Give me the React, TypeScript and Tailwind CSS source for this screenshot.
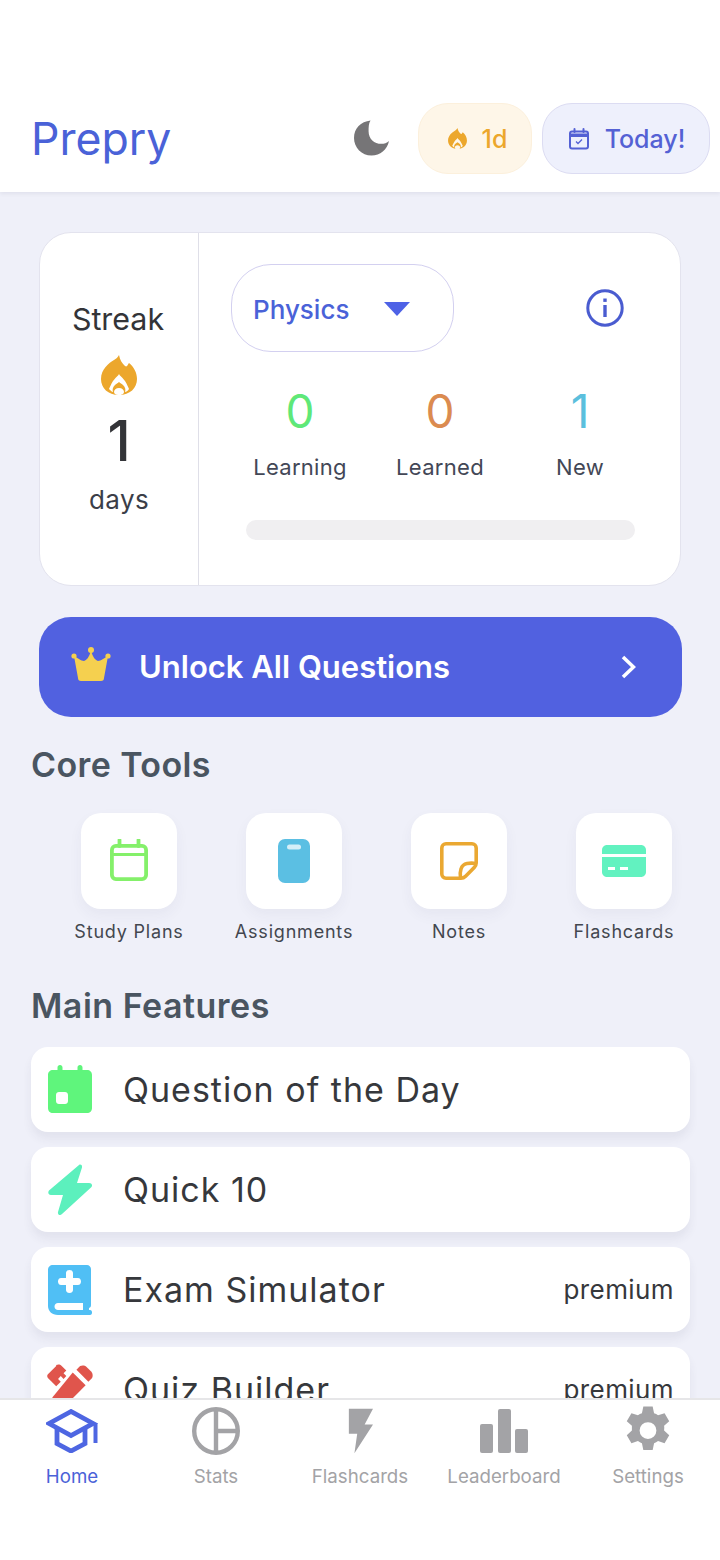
import React from 'react';

function Flame({ className }: { className?: string }) {
  return (
    <svg viewBox="0 0 36 40" className={className} fill="currentColor">
      <path
        fillRule="evenodd"
        d="M18 0c1 5 3 8 5 10 1 1 2 2 3 1 1-1 1-2 2-3 5 4 8 10 8 16 0 9-7 16-18 16S0 33 0 24C0 14 8 8 13 5c2-1 4-3 5-5Zm0 19c-1 2-3 3-6 7-2 3-3 6-4 8 2 2 3 3 4 3-1-3 0-5 2-7 1-1 3-2 4-3 1 1 3 2 4 3 2 2 3 4 2 7 1 0 3-1 4-3-1-2-2-5-4-8-3-4-5-5-6-7Zm0 14c-3 0-5 2-5 4 0 2 2 3 5 3s5-1 5-3c0-2-2-4-5-4Z"
      />
    </svg>
  );
}

function Stat({ value, label, color }: { value: string; label: string; color: string }) {
  return (
    <div className="w-[140px] flex flex-col items-center">
      <div className={`text-[46px] leading-[56px] ${color}`}>{value}</div>
      <div className="mt-[14px] text-[22px] leading-[28px] tracking-[0.3px] text-[#434756]">{label}</div>
    </div>
  );
}

function Tool({ label, icon }: { label: string; icon: React.ReactNode }) {
  return (
    <div className="w-[96px] shrink-0 flex flex-col items-center">
      <div className="w-[96px] h-[96px] rounded-[20px] bg-white shadow-[0_6px_14px_rgba(60,60,90,0.05)] flex items-center justify-center">
        {icon}
      </div>
      <div className="mt-[11px] text-[18px] leading-[24px] whitespace-nowrap tracking-[0.8px] text-[#43474f]">{label}</div>
    </div>
  );
}

function FeatureRow({ label, icon, premium }: { label: string; icon: React.ReactNode; premium?: boolean }) {
  return (
    <div className="h-[85px] shrink-0 rounded-[17px] bg-white shadow-[0_7px_10px_rgba(60,60,90,0.07)] flex items-center pl-[16px] pr-[16px]">
      <div className="w-[46px] h-[54px] flex items-center justify-center shrink-0">{icon}</div>
      <div className="ml-[30px] text-[34px] leading-[42px] tracking-[1px] text-[#36383c]">{label}</div>
      {premium && <div className="ml-auto text-[26px] leading-[32px] tracking-[0.4px] text-[#36383c]">premium</div>}
    </div>
  );
}

function Tab({ label, icon, active }: { label: string; icon: React.ReactNode; active?: boolean }) {
  return (
    <div className="w-[144px] flex flex-col items-center">
      <div className="h-[56px] flex items-center justify-center">{icon}</div>
      <div className={`mt-[6px] text-[18.7px] leading-[24px] whitespace-nowrap ${active ? 'text-[#4a62d8]' : 'text-[#a3a3a6]'}`}>
        {label}
      </div>
    </div>
  );
}

export default function App() {
  return (
    <div className="w-[720px] h-[1560px] flex flex-col overflow-hidden bg-white font-['Inter',sans-serif]">
      {/* header */}
      <div className="relative z-10 h-[192px] shrink-0 bg-white shadow-[0_2px_4px_rgba(60,60,90,0.08)] flex items-start pt-[103px] pl-[31px] pr-[10px]">
        <div className="mt-[9px] text-[44.6px] leading-[54px] text-[#4a62d8]">Prepry</div>
        <svg viewBox="0 0 36 36" className="ml-auto mt-[17px] w-[35px] h-[36px] text-[#767577]" fill="currentColor">
          <path d="M17 0C7 1 0 8 0 18c0 10 8 18 18 18 9 0 16-6 18-15-2 2-5 3-8 3-7 0-13-5-13-13 0-4 0-8 2-11Z" />
        </svg>
        <div className="ml-[29px] w-[114px] h-[71px] rounded-[30px] bg-[#fef6e8] border border-[#fcf0dc] flex items-center justify-center gap-[15px] pl-[5px]">
          <Flame className="w-[19px] h-[21px] text-[#eca72c]" />
          <span className="text-[25px] font-medium text-[#eca72c] leading-[30px]">1d</span>
        </div>
        <div className="ml-[10px] w-[168px] h-[71px] rounded-[30px] bg-[#eef0fc] border border-[#dcdcf2] flex items-center justify-center gap-[14px]">
          <svg viewBox="0 0 24 24" className="w-[24px] h-[24px] text-[#5461d4]" fill="none" stroke="currentColor" strokeWidth="2">
            <rect x="3" y="4.500" width="18" height="17" rx="2" />
            <path d="M3 7.500h18V9H3z" fill="currentColor" />
            <path d="M7.500 2v3M16.500 2v3" strokeLinecap="round" />
            <path d="m9 14.500 2 2 4-4" strokeWidth="1.3" />
          </svg>
          <span className="text-[25px] font-medium text-[#5461d4] leading-[30px]">Today!</span>
        </div>
      </div>

      {/* scrolling content */}
      <div className="flex-1 min-h-0 overflow-hidden bg-[#eff0f9]">
        <div className="pt-[40px] pl-[39px] pr-[38px]">
          <div className="mr-[1px] h-[354px] rounded-[32px] bg-white border border-[#e3e3ee] flex">
            <div className="w-[159px] shrink-0 border-r border-[#dfdfe8] flex flex-col items-center pt-[67px]">
              <div className="text-[30.4px] leading-[38px] text-[#333438] mr-[2px]">Streak</div>
              <Flame className="mt-[17px] w-[36px] h-[40px] text-[#eca72c]" />
              <div className="mt-[12px] text-[56px] leading-[68px] font-medium text-[#333438]">1</div>
              <div className="mt-[8px] text-[26px] leading-[34px] tracking-[0.4px] text-[#3b3e48]">days</div>
            </div>
            <div className="flex-1 min-w-0 pt-[31px]">
              <div className="flex items-center pl-[32px]">
                <div className="w-[223px] h-[88px] rounded-[40px] border-[1.5px] border-[#d3d0f0] flex items-center pl-[21px]">
                  <span className="mt-[3px] text-[26px] leading-[32px] font-medium text-[#4a62d8]">Physics</span>
                  <svg viewBox="0 0 26 14" className="ml-[35px] mt-[1px] w-[26px] h-[14px] text-[#4e62e6]" fill="currentColor">
                    <path d="M0 0h26L13 14Z" />
                  </svg>
                </div>
                <svg viewBox="0 0 38 38" className="ml-[132px] w-[38px] h-[38px] text-[#4a5cd0]" fill="none" stroke="currentColor" strokeWidth="3">
                  <circle cx="19" cy="19" r="17.200" />
                  <path d="M19 16v12" strokeWidth="3.400" />
                  <path d="M19 9.500v3.400" strokeWidth="3.400" />
                </svg>
              </div>
              <div className="mt-[31px] ml-[31px] flex">
                <Stat value="0" label="Learning" color="text-[#5fe878]" />
                <Stat value="0" label="Learned" color="text-[#db8b50]" />
                <Stat value="1" label="New" color="text-[#5bbfdd]" />
              </div>
              <div className="mt-[39px] ml-[47px] w-[389px] h-[20px] rounded-full bg-[#f0eff1]" />
            </div>
          </div>

          <div className="mt-[31px] h-[100px] rounded-[32px] bg-[#5161e0] flex items-center pl-[32px] pr-[46px]">
            <svg viewBox="0 0 40 34" className="w-[40px] h-[34px] mt-[-6px] text-[#f5d04f]" fill="currentColor">
              <circle cx="20" cy="3" r="3" />
              <circle cx="3" cy="9" r="2.600" />
              <circle cx="37" cy="9" r="2.600" />
              <path d="M20 4c2 6 4 9 7 10 3 0 6-3 10-5l-4 22c0 2-1 3-3 3H10c-2 0-3-1-3-3L3 9c4 2 7 5 10 5 3-1 5-4 7-10Z" />
            </svg>
            <span className="ml-[28px] text-[31px] leading-[38px] font-semibold text-white">Unlock All Questions</span>
            <svg viewBox="0 0 15 24" className="ml-auto w-[15px] h-[24px] text-white" fill="none" stroke="currentColor" strokeWidth="3.600">
              <path d="m2 2 10.500 10L2 22" />
            </svg>
          </div>
        </div>

        <div className="pl-[31px] pr-[30px]">
          <div className="mt-[28px] text-[34px] leading-[40px] tracking-[0.4px] font-semibold text-[#4a5561]">Core Tools</div>
          <div className="mt-[28px] ml-[50px] flex gap-[69px]">
            <Tool
              label="Study Plans"
              icon={
                <svg viewBox="0 0 38 42" className="w-[38px] h-[42px] mt-[-2px] text-[#84f06a]" fill="none" stroke="currentColor" strokeWidth="3.800">
                  <rect x="1.900" y="6.900" width="34.200" height="33.200" rx="4" />
                  <path d="M1.900 15.500h34.200" strokeWidth="3.200" />
                  <path d="M9.500 1v6M28.500 1v6" strokeLinecap="round" />
                </svg>
              }
            />
            <Tool
              label="Assignments"
              icon={
                <svg viewBox="0 0 32 44" className="w-[32px] h-[44px] text-[#5bbfe3]">
                  <rect width="32" height="44" rx="7" fill="currentColor" />
                  <rect x="9" y="5.500" width="14" height="5" rx="2.500" fill="#ffffff" fillOpacity="0.75" />
                </svg>
              }
            />
            <Tool
              label="Notes"
              icon={
                <svg viewBox="0 0 38 38" className="w-[38px] h-[38px] text-[#eaa832]" fill="none" stroke="currentColor" strokeWidth="3.600">
                  <path d="M6 1.800h26c2.300 0 4.200 1.900 4.200 4.200v15c0 2-1 3.500-2 4.600L25.600 34.200c-1 1-2.600 2-4.600 2H6c-2.300 0-4.200-1.900-4.200-4.200V6C1.800 3.700 3.700 1.800 6 1.800Z" />
                  <path d="M20.500 36c-.5-3-.5-6 .5-9s3-5 6-5.500c3-.5 6-.5 9 0" />
                </svg>
              }
            />
            <Tool
              label="Flashcards"
              icon={
                <svg viewBox="0 0 44 32" className="w-[44px] h-[32px] text-[#62f2c0]" fill="currentColor">
                  <path d="M5 0h34c2.800 0 5 2.200 5 5v4H0V5c0-2.800 2.200-5 5-5Z" />
                  <path fillRule="evenodd" d="M0 12h44v15c0 2.800-2.200 5-5 5H5c-2.800 0-5-2.200-5-5V12Zm6 10v3h7v-3H6Zm12 0v3h8v-3h-8Z" />
                </svg>
              }
            />
          </div>

          <div className="mt-[42px] text-[34px] leading-[40px] tracking-[0.5px] font-semibold text-[#4a5561]">Main Features</div>
          <div className="mt-[21px] flex flex-col gap-[15px]">
            <FeatureRow
              label="Question of the Day"
              icon={
                <svg viewBox="0 0 44 48" className="w-[44px] h-[48px] mt-[-2px] text-[#5ff57c]" fill="currentColor">
                  <path
                    fillRule="evenodd"
                    d="M12 0c1.500 0 2.500 1 2.500 2.500V5h15V2.500C29.500 1 30.500 0 32 0s2.500 1 2.500 2.500V5H39c3 0 5 2 5 5v33c0 3-2 5-5 5H5c-3 0-5-2-5-5V10c0-3 2-5 5-5h4.500V2.500C9.500 1 10.500 0 12 0ZM11 27c-1.700 0-3 1.300-3 3v6c0 1.700 1.300 3 3 3h6c1.700 0 3-1.300 3-3v-6c0-1.700-1.300-3-3-3h-6Z"
                  />
                </svg>
              }
            />
            <FeatureRow
              label="Quick 10"
              icon={
                <svg viewBox="0 0 44 52" className="w-[44px] h-[52px] text-[#5cf0bd]" fill="currentColor">
                  <path d="M31 1c1.500-1 3.500 0 3 2.500L29 19h12c3 0 4 2.500 2 4.500L14 50c-2 2-4.500.5-4-2l5-17H3c-2.500 0-3.500-2.500-2-4.500L31 1Z" />
                </svg>
              }
            />
            <FeatureRow
              premium
              label="Exam Simulator"
              icon={
                <svg viewBox="0 0 44 50" className="w-[44px] h-[50px] text-[#50bff5]" fill="currentColor">
                  <path
                    fillRule="evenodd"
                    d="M5 0h34c2 0 4 2 4 4v36c0 1.500-.5 2.500-2 3v2h1c1.500 0 2 1 2 2.500S43.500 50 42 50H10C4 50 0 46 0 41V5c0-3 2-5 5-5Zm13 8v5h-5c-1.500 0-3 1-3 3.500S11.500 20 13 20h5v5c0 1.500 1 3 3.500 3S25 26.500 25 25v-5h5c1.500 0 3-1 3-3.500S31.500 13 30 13h-5V8c0-1.500-1-3-3.500-3S18 6.500 18 8ZM10 38c-2 0-3.500 1.500-3.500 3.500S8 45 10 45h25v-7H10Z"
                  />
                </svg>
              }
            />
            <FeatureRow
              premium
              label="Quiz Builder"
              icon={
                <svg viewBox="0 0 50 52" className="w-[50px] h-[52px] mt-[-1px] text-[#e0554c]" fill="currentColor">
                  <path d="M10 1 1 10c-1 1-1 3 0 4l9 9 5-5-3-3 3-3 3 3 3-3-3-3 3-3-5-5c-2-2-4-2-6-1Z" />
                  <path d="M36 1c2-1 5-1 7 1l5 5c2 2 2 5 1 7l-4 4-13-13 4-4Z" />
                  <path d="M28 8 42 22 17 47 2 51l4-16L28 8Z" />
                </svg>
              }
            />
          </div>
        </div>
      </div>

      {/* tab bar */}
      <div className="relative z-10 h-[162px] shrink-0 bg-white border-t-2 border-[#e6e6e8] pt-[3px] flex">
        <Tab
          active
          label="Home"
          icon={
            <svg viewBox="0 0 52 44" className="w-[52px] h-[44px] text-[#4e66e2]" fill="none" stroke="currentColor" strokeWidth="4.800">
              <path d="M25 2.500 3 14.500l22 12 22-12-22-12Z" />
              <path d="M11 19.500v15l14 7.500 14-7.500v-15" />
              <path d="M49.500 14v20" strokeWidth="4" />
            </svg>
          }
        />
        <Tab
          label="Stats"
          icon={
            <svg viewBox="0 0 48 48" className="w-[48px] h-[48px] text-[#a3a3a6]" fill="none" stroke="currentColor" strokeWidth="4.400">
              <circle cx="24" cy="24" r="21.800" />
              <path d="M24 2v44M24 24h22" />
            </svg>
          }
        />
        <Tab
          label="Flashcards"
          icon={
            <svg viewBox="0 0 28 48" className="w-[26px] h-[48px] text-[#a3a3a6]" fill="currentColor">
              <path d="M2 0h26l-9 17h9L8 48l3-21H2V0Z" />
            </svg>
          }
        />
        <Tab
          label="Leaderboard"
          icon={
            <svg viewBox="0 0 48 44" className="w-[48px] h-[44px] text-[#a3a3a6]" fill="currentColor">
              <rect x="0" y="15" width="13" height="29" rx="2" />
              <rect x="18" y="0" width="13" height="44" rx="2" />
              <rect x="35" y="20" width="13" height="24" rx="2" />
            </svg>
          }
        />
        <Tab
          label="Settings"
          icon={
            <svg viewBox="0 0 24 24" className="w-[56px] h-[56px] text-[#a3a3a6]" fill="currentColor">
              <path
                fillRule="evenodd"
                d="M10 1.500h4l.6 2.900c.6.200 1.200.500 1.700.9l2.800-.9 2 3.400-2.200 2c.1.600.1 1.200 0 1.800v.2l2.200 2-2 3.400-2.800-.9c-.5.400-1.100.700-1.700.9l-.6 2.900h-4l-.6-2.900c-.6-.2-1.200-.5-1.700-.9l-2.800.9-2-3.400 2.200-2v-2l-2.200-2 2-3.400 2.800.9c.5-.4 1.100-.7 1.700-.9l.6-2.900ZM12 8.200a3.600 3.600 0 1 0 0 7.200 3.600 3.600 0 0 0 0-7.200Z"
              />
            </svg>
          }
        />
      </div>
    </div>
  );
}
